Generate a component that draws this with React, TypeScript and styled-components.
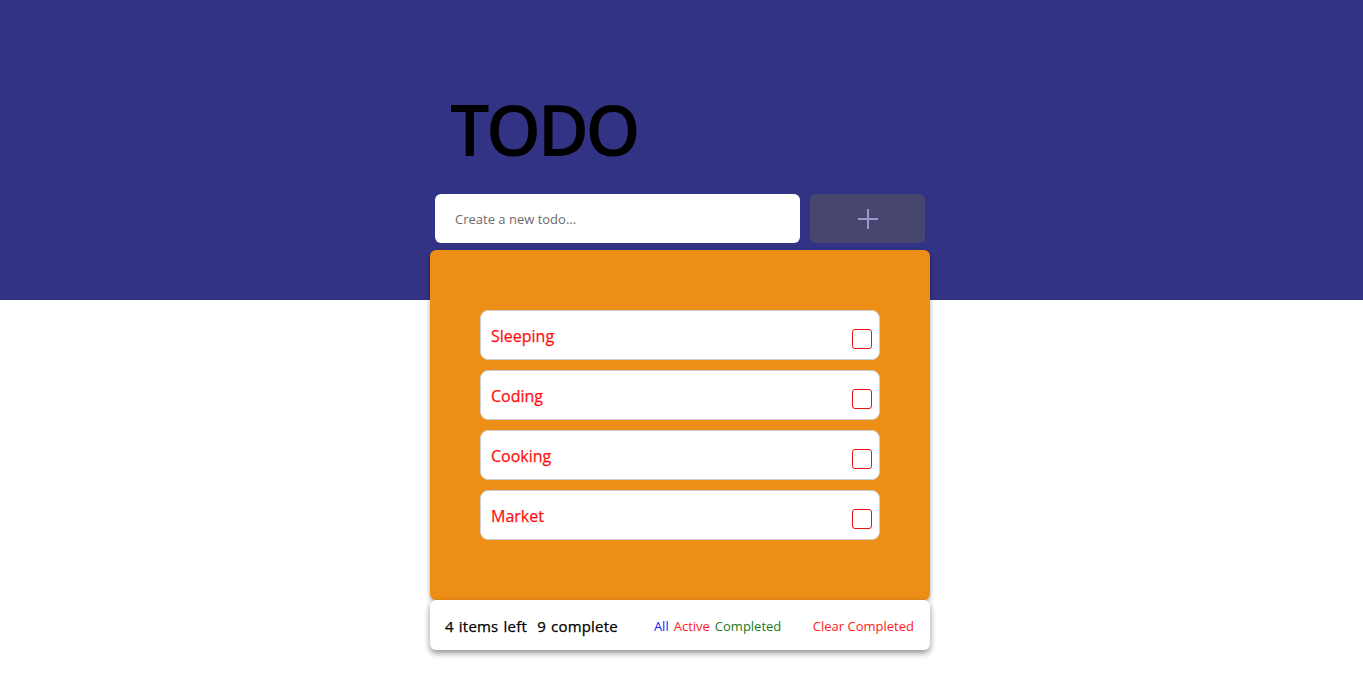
import React from "react";
import styled, { createGlobalStyle } from "styled-components";

const Global = createGlobalStyle`
  html, body { margin: 0; padding: 0; }
  body {
    font-family: "Open Sans", "Noto Sans", sans-serif;
    background: linear-gradient(to bottom, #333385 0, #333385 300px, #ffffff 300px);
    min-height: 696px;
  }
`;

const Page = styled.div`
  width: 500px;
  margin-left: calc(50% - 251.5px);
  padding-top: 86px;
  display: flex;
  flex-direction: column;
`;

const Title = styled.h1`
  margin: 0 0 22px 20px;
  font-size: 70px;
  line-height: 86px;
  font-weight: 600;
  color: #000;
  letter-spacing: -3.5px;
`;

const InputRow = styled.div`
  display: flex;
  gap: 10px;
  padding: 0 5px;
`;

const Input = styled.input`
  flex: 0 0 365px;
  height: 49px;
  box-sizing: border-box;
  border: none;
  border-radius: 6px;
  background: #fff;
  padding: 0 20px;
  font-family: inherit;
  font-size: 13px;
  outline: none;
  &::placeholder { color: #6b6b6b; }
`;

const AddButton = styled.button`
  flex: 0 0 115px;
  height: 49px;
  border: none;
  border-radius: 6px;
  background: #47466f;
  display: flex;
  align-items: center;
  justify-content: center;
  padding: 0;
`;

const Card = styled.div`
  margin-top: 7px;
  background: #ed8f16;
  border-radius: 6px;
  padding: 60px 50px;
  display: flex;
  flex-direction: column;
  gap: 10px;
  box-shadow: 0 2px 5px rgba(0, 0, 0, 0.35);
`;

const Item = styled.div`
  height: 50px;
  box-sizing: border-box;
  background: #fff;
  border: 1px solid #cfcfcf;
  border-radius: 8px;
  display: flex;
  align-items: center;
  justify-content: space-between;
  padding: 0 7px 0 10px;
`;

const ItemText = styled.span`
  color: #ff1010;
  font-size: 16px;
  font-weight: 500;
  margin-top: 1px;
  -webkit-text-stroke: 0.25px #ff1010;
`;

const Box = styled.span`
  width: 20px;
  height: 20px;
  box-sizing: border-box;
  border: 1px solid #e81010;
  border-radius: 3px;
  margin-top: 8px;
`;

const Footer = styled.div`
  height: 50px;
  background: #fff;
  border-radius: 6px;
  box-shadow: 0 3px 6px rgba(0, 0, 0, 0.45);
  display: flex;
  align-items: center;
  padding: 0 16px 0 15px;
`;

const Counts = styled.span`
  font-size: 15px;
  font-weight: 400;
  color: #000;
  word-spacing: 1px;
  margin-top: 2px;
  -webkit-text-stroke: 0.25px #000;
  letter-spacing: 0.2px;
`;

const Filters = styled.div`
  display: flex;
  gap: 5px;
  margin-left: 36px;
  margin-top: 2px;
`;

const Link = styled.span<{ $c: string }>`
  font-size: 13px;
  font-weight: 500;
  color: ${(p) => p.$c};
`;

const Clear = styled(Link)`
  margin-left: auto;
  margin-top: 2px;
`;

const items = ["Sleeping", "Coding", "Cooking", "Market"];

export default function App() {
  return (
    <>
      <Global />
      <Page>
        <Title>TODO</Title>
        <InputRow>
          <Input placeholder="Create a new todo..." />
          <AddButton aria-label="add">
            <svg width="22" height="22" viewBox="0 0 22 22">
              <path d="M11 1v20M1 11h20" stroke="#9b98cc" strokeWidth="2" />
            </svg>
          </AddButton>
        </InputRow>
        <Card>
          {items.map((t) => (
            <Item key={t}>
              <ItemText>{t}</ItemText>
              <Box />
            </Item>
          ))}
        </Card>
        <Footer>
          <Counts>4 items left&nbsp; 9 complete</Counts>
          <Filters>
            <Link $c="#1a1aff">All</Link>
            <Link $c="#ff1a1a">Active</Link>
            <Link $c="#1a7a1a">Completed</Link>
          </Filters>
          <Clear $c="#ff1a1a">Clear Completed</Clear>
        </Footer>
      </Page>
    </>
  );
}
